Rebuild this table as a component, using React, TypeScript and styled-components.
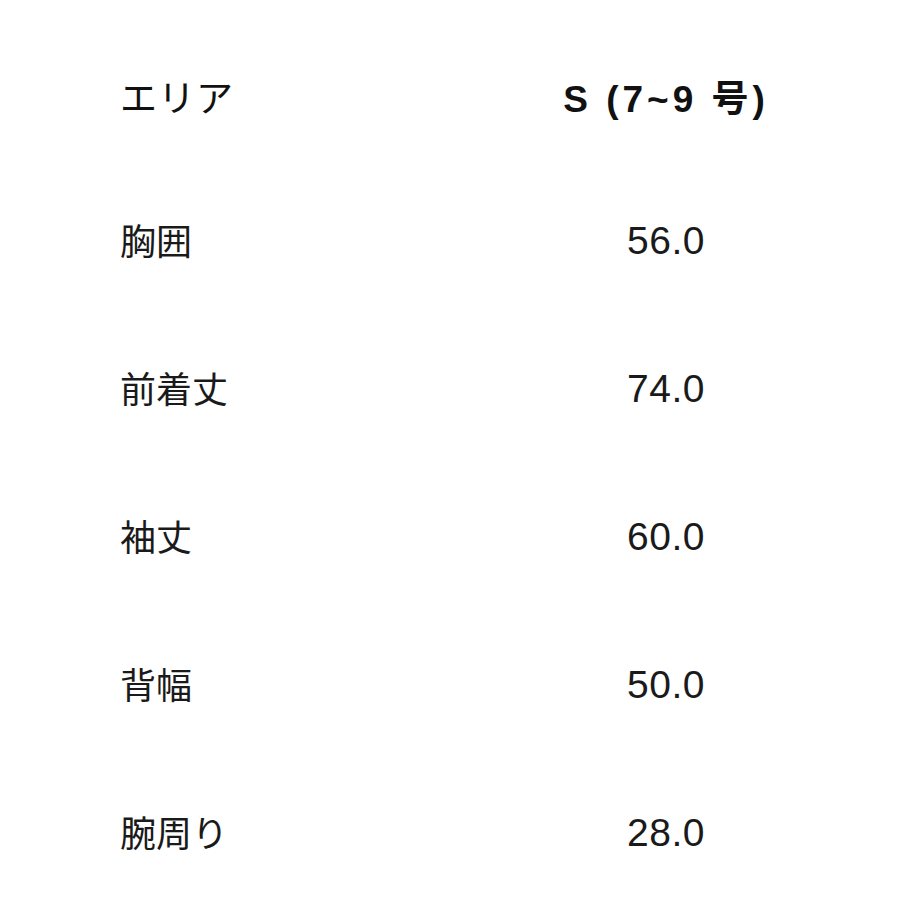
import styled, { createGlobalStyle } from "styled-components";

type Row = {
  area: string;
  value: string;
};

const rows: Row[] = [
  { area: "胸囲", value: "56.0" },
  { area: "前着丈", value: "74.0" },
  { area: "袖丈", value: "60.0" },
  { area: "背幅", value: "50.0" },
  { area: "腕周り", value: "28.0" },
];

export default function App() {
  return (
    <>
      <GlobalStyle />
      <Page>
        <SizeTable>
          <HeadCell>エリア</HeadCell>
          <HeadCell $value>S (7~9 号)</HeadCell>
          {rows.map((row) => (
            <Line key={row.area}>
              <AreaCell>{row.area}</AreaCell>
              <ValueCell>{row.value}</ValueCell>
            </Line>
          ))}
        </SizeTable>
      </Page>
    </>
  );
}

const GlobalStyle = createGlobalStyle`
  html, body {
    margin: 0;
    padding: 0;
    background: #fff;
  }

  body {
    font-family: "Liberation Sans", "Noto Sans CJK JP", sans-serif;
    color: #111;
  }
`;

const Page = styled.main`
  width: 900px;
  height: 900px;
  box-sizing: border-box;
  padding: 25px 0 0 120px;
  background: #fff;
`;

const SizeTable = styled.div`
  display: grid;
  grid-template-columns: 380px 332px;
  grid-template-rows: 142px;
  grid-auto-rows: 148px;
`;

const Line = styled.div`
  display: contents;
`;

const HeadCell = styled.div<{ $value?: boolean }>`
  display: flex;
  align-items: center;
  justify-content: ${({ $value }) => ($value ? "center" : "flex-start")};
  font-size: 37px;
  font-weight: ${({ $value }) => ($value ? 700 : 400)};
  letter-spacing: ${({ $value }) => ($value ? "4px" : "1px")};
  color: #111;
  white-space: nowrap;
`;

const AreaCell = styled.div`
  display: flex;
  align-items: center;
  padding-bottom: 4px;
  font-family: "Noto Sans CJK JP", sans-serif;
  font-size: 36px;
  color: #1a1a1a;
`;

const ValueCell = styled.div`
  display: flex;
  align-items: center;
  justify-content: center;
  font-size: 39px;
  letter-spacing: 0.5px;
  color: #1a1a1a;
`;
